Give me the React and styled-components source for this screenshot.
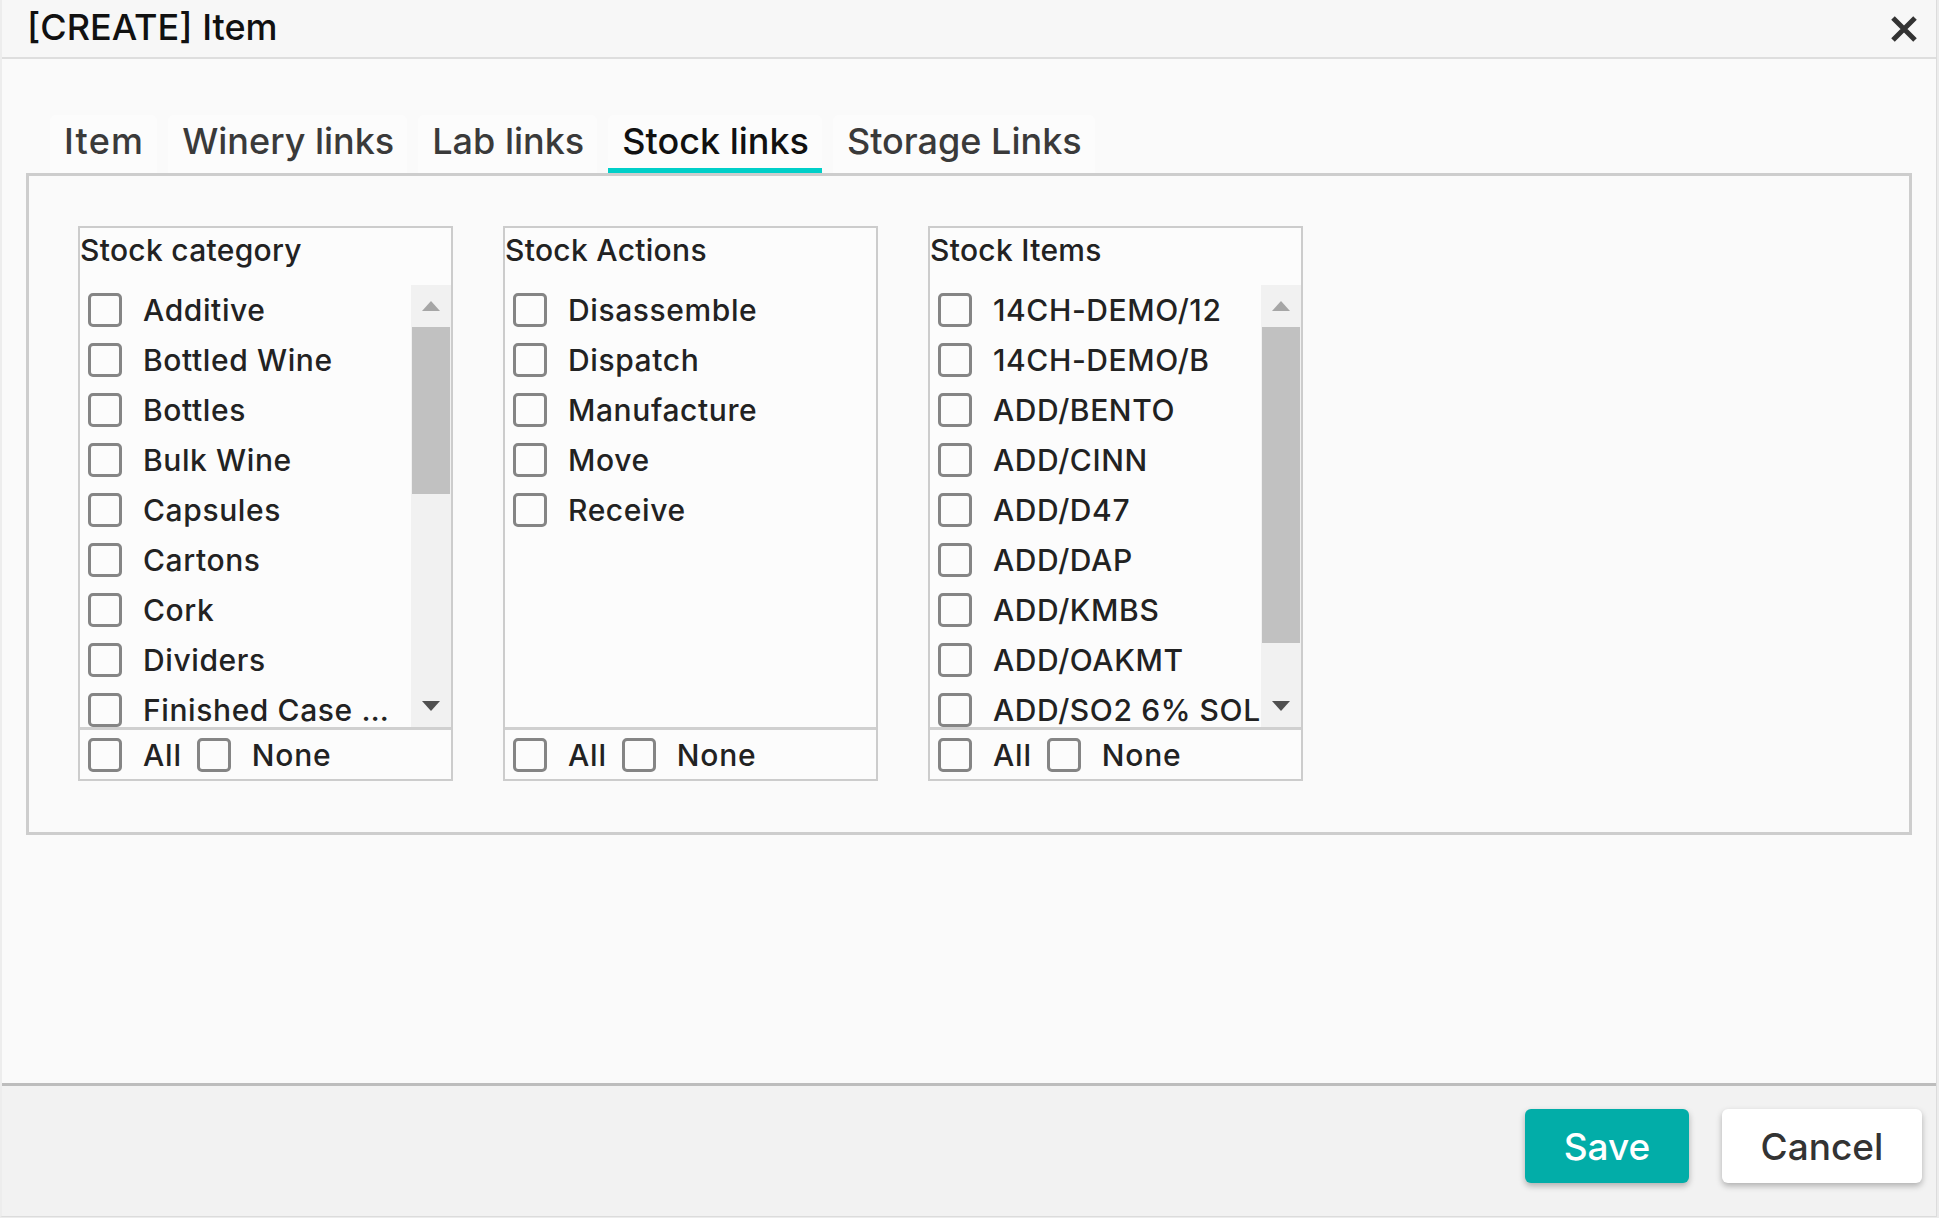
import styled, { createGlobalStyle } from "styled-components";

const GlobalStyle = createGlobalStyle`
    body {
        margin: 0;
        background-color: #ececec;
        font-family: Inter, "Open Sans", sans-serif;
        color: #222;
    }
`

const categories = [
    "Additive", "Bottled Wine", "Bottles", "Bulk Wine", "Capsules", "Cartons", "Cork", "Dividers",
    "Finished Case Goods", "Foils", "Glue", "Labels", "Lab Supplies", "Miscellaneous", "Packaging",
    "Pallets", "Screwcaps", "Shrink Wrap", "Winemaking Supplies",
]
const actions = ["Disassemble", "Dispatch", "Manufacture", "Move", "Receive"]
const stockItems = [
    "14CH-DEMO/12", "14CH-DEMO/B", "ADD/BENTO", "ADD/CINN", "ADD/D47", "ADD/DAP", "ADD/KMBS",
    "ADD/OAKMT", "ADD/SO2 6% SOLUTION", "ADD/TAN",
]
const tabs = ["Item", "Winery links", "Lab links", "Stock links", "Storage Links"]

const ROW = 50
const LIST_HEIGHT = 442
const BUTTON = 42

const Checklist = ({ title, items, ellipsis = true }) => {
    const scrolls = items.length * ROW > LIST_HEIGHT
    const track = LIST_HEIGHT - BUTTON * 2
    const thumb = Math.round(track * (LIST_HEIGHT / (items.length * ROW)))
    return (
        <ListBox>
            <ListTitle>{title}</ListTitle>
            <ListArea>
                <Rows>
                    {items.map((item) => (
                        <Row key={item}>
                            <Box />
                            <Label $ellipsis={ellipsis}>{item}</Label>
                        </Row>
                    ))}
                </Rows>
                {scrolls && (
                    <Scrollbar>
                        <ArrowButton>
                            <svg width="18" height="10" viewBox="0 0 18 10"><polygon points="0,10 18,10 9,0" fill="#a6a6a6" /></svg>
                        </ArrowButton>
                        <Track>
                            <Thumb style={{ height: thumb }} />
                        </Track>
                        <ArrowButton>
                            <svg width="18" height="10" viewBox="0 0 18 10"><polygon points="0,0 18,0 9,10" fill="#505050" /></svg>
                        </ArrowButton>
                    </Scrollbar>
                )}
            </ListArea>
            <ListFooter>
                <Box />
                <FooterLabel>All</FooterLabel>
                <Box />
                <FooterLabel>None</FooterLabel>
            </ListFooter>
        </ListBox>
    )
}

const App = () => {
    return (
        <>
            <GlobalStyle />
            <Dialog>
                <Header>
                    <Title>[CREATE] Item</Title>
                    <svg width="28" height="28" viewBox="0 0 28 28">
                        <path d="M3 3 L25 25 M25 3 L3 25" stroke="#333" strokeWidth="5" />
                    </svg>
                </Header>
                <Body>
                    <TabBar>
                        {tabs.map((tab) => (
                            <Tab key={tab} $active={tab === "Stock links"}>{tab}</Tab>
                        ))}
                    </TabBar>
                    <Panel>
                        <Checklist title="Stock category" items={categories} />
                        <Checklist title="Stock Actions" items={actions} />
                        <Checklist title="Stock Items" items={stockItems} ellipsis={false} />
                    </Panel>
                </Body>
                <Footer>
                    <Button $primary>Save</Button>
                    <Button>Cancel</Button>
                </Footer>
            </Dialog>
        </>
    )
}

const Dialog = styled.div`
    display: flex;
    flex-direction: column;
    width: 1934px;
    height: 1216px;
    background-color: #fafafa;
    border-left: 2px solid #ededed;
    border-right: 1px solid #dcdcdc;
    border-bottom: 1px solid #dcdcdc;
`

const Header = styled.div`
    display: flex;
    justify-content: space-between;
    align-items: center;
    height: 57px;
    padding: 0 18px 0 25px;
    background-color: #f7f7f7;
    border-bottom: 2px solid #dedede;
`

const Title = styled.h1`
    margin: 0;
    padding-bottom: 4px;
    font-size: 36px;
    font-weight: 500;
    color: #111;
`

const Body = styled.div`
    flex: 1;
    padding: 0 24px;
`

const TabBar = styled.div`
    display: flex;
    gap: 11px;
    margin-top: 56px;
    padding-left: 24px;
`

const Tab = styled.div`
    height: 53px;
    line-height: 53px;
    padding: 0 13px 0 14px;
    font-size: 36px;
    font-weight: 500;
    color: ${(p) => (p.$active ? "#111" : "#3a3a3a")};
    background-color: #fcfcfc;
    border-radius: 6px 6px 0 0;
    border-bottom: 5px solid ${(p) => (p.$active ? "#00cfc8" : "transparent")};

    &:first-child {
        letter-spacing: 1.2px;
    }
`

const Panel = styled.div`
    display: flex;
    align-items: flex-start;
    gap: 50px;
    height: 556px;
    padding: 50px 49px;
    border: 3px solid #cdcdcd;
`

const ListBox = styled.div`
    display: flex;
    flex-direction: column;
    width: 371px;
    border: 2px solid #cccccc;
    background-color: #fcfcfc;
`

const ListTitle = styled.div`
    height: 57px;
    line-height: 44px;
    font-size: 30px;
    font-weight: 500;
    letter-spacing: 0.3px;
    color: #222;
`

const ListArea = styled.div`
    display: flex;
    height: ${LIST_HEIGHT}px;
`

const Rows = styled.div`
    flex: 1;
    min-width: 0;
    overflow: hidden;
`

const Row = styled.div`
    display: flex;
    align-items: center;
    height: ${ROW}px;
    padding-left: 8px;
`

const Box = styled.span`
    flex: none;
    box-sizing: border-box;
    width: 34px;
    height: 34px;
    border: 3px solid #858585;
    border-radius: 5px;
    margin-right: 21px;
    filter: blur(0.4px);
`

const Label = styled.span`
    font-size: 30px;
    font-weight: 500;
    letter-spacing: 0.6px;
    color: #222;
    white-space: nowrap;
    overflow: hidden;
    text-overflow: ${(p) => (p.$ellipsis ? "ellipsis" : "clip")};
`

const Scrollbar = styled.div`
    display: flex;
    flex-direction: column;
    width: 40px;
    background-color: #f1f1f1;
`

const ArrowButton = styled.div`
    display: flex;
    justify-content: center;
    align-items: center;
    height: ${BUTTON}px;
`

const Track = styled.div`
    flex: 1;
    padding: 0 1px;
`

const Thumb = styled.div`
    background-color: #c1c1c1;
`

const ListFooter = styled.div`
    display: flex;
    align-items: center;
    height: 49px;
    padding-left: 8px;
    border-top: 3px solid #d0d0d0;
`

const FooterLabel = styled.span`
    margin-right: 15px;
    font-size: 30px;
    font-weight: 500;
    letter-spacing: 0.8px;
    color: #222;
`

const Footer = styled.div`
    display: flex;
    justify-content: flex-end;
    align-items: flex-start;
    gap: 33px;
    height: 107px;
    padding: 23px 14px 0 0;
    background-color: #f2f2f2;
    border-top: 3px solid #bdbdbd;
`

const Button = styled.button`
    width: ${(p) => (p.$primary ? "164px" : "200px")};
    height: 74px;
    border: none;
    border-radius: 6px;
    font-family: inherit;
    font-size: 37px;
    font-weight: 500;
    color: ${(p) => (p.$primary ? "#fff" : "#333")};
    background-color: ${(p) => (p.$primary ? "#02ada8" : "#fff")};
    box-shadow: 0 3px 6px rgba(0, 0, 0, 0.28);
`

export default App
